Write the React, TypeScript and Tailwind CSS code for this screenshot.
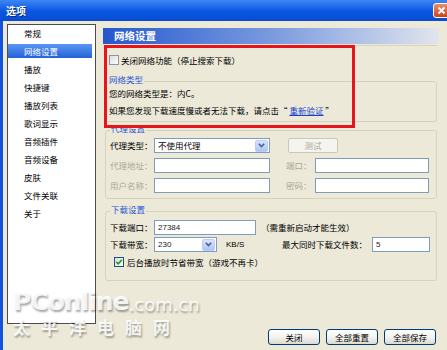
import React from 'react';

const navItems = ['常规', '网络设置', '播放', '快捷键', '播放列表', '歌词显示', '音频插件', '音频设备', '皮肤', '文件关联', '关于'];

const Check = ({ checked }: { checked?: boolean }) => (
    <span
        className={`flex h-[10px] w-[10px] shrink-0 items-center justify-center border bg-linear-to-br from-[#dcdcd7] to-white ${
            checked ? 'border-[#1c5180]' : 'border-[#8a96a8]'
        }`}
    >
        {checked && (
            <svg width="8" height="8" viewBox="0 0 8 8">
                <path d="M1.2 3.8 L3.2 5.8 L6.9 1.8" stroke="#21a121" strokeWidth="1.7" fill="none" />
            </svg>
        )}
    </span>
);

const Field = ({ className, value }: { className: string; value?: string }) => (
    <div className={`flex h-[15px] items-center border border-[#7f9db9] bg-white pl-[3px] ${className}`}>
        {value && <span className="font-['Liberation_Sans',sans-serif] text-[8px] leading-none text-[#222]">{value}</span>}
    </div>
);

const Select = ({ className, value, mono }: { className: string; value: string; mono?: boolean }) => (
    <div className={`flex h-[15px] items-center justify-between border border-[#7f9db9] bg-white pl-[3px] pr-px ${className}`}>
        <span className={mono ? "font-['Liberation_Sans',sans-serif] text-[8px] leading-none text-[#222]" : 'leading-none'}>{value}</span>
        <span className="flex h-[12px] w-[13px] items-center justify-center rounded-[2px] border border-[#b9cdf5] bg-linear-to-b from-[#d8e4fd] to-[#adc5f5]">
            <svg width="7" height="5" viewBox="0 0 7 5">
                <path d="M0.8 0.8 L3.5 3.6 L6.2 0.8" stroke="#4d6185" strokeWidth="1.6" fill="none" />
            </svg>
        </span>
    </div>
);

const Button = ({ label }: { label: string }) => (
    <div className="flex h-[16px] w-[52px] items-center justify-center rounded-[3px] border border-[#003c74] bg-linear-to-b from-white via-[#f3f3ef] to-[#dcdad0] leading-none">
        {label}
    </div>
);

const App: React.FC = () => {
    return (
        <div className="relative flex h-[350px] w-[447px] flex-col overflow-hidden bg-[#ece9d8] font-['Noto_Sans_CJK_SC',sans-serif] text-[8.5px] text-black">
            {/* title bar */}
            <div className="flex h-[21px] shrink-0 items-center justify-between bg-linear-to-b from-[#3d86f4] via-[#0b58e2] to-[#0a4bd3] pl-[6px]">
                <span className="text-[10px] font-bold leading-none text-white [text-shadow:1px_1px_0_#0a2a80]">选项</span>
                <div className="-mr-[3px] flex h-[15px] w-[17px] items-center justify-center rounded-[3px] border border-white bg-linear-to-b from-[#eb8c68] to-[#c9431c]">
                    <svg width="9" height="9" viewBox="0 0 9 9">
                        <path d="M1.5 1.5 L7.5 7.5 M7.5 1.5 L1.5 7.5" stroke="white" strokeWidth="1.8" />
                    </svg>
                </div>
            </div>

            <div className="flex flex-1 border-l-[3px] border-[#1252dc]">
                {/* nav list */}
                <div className="ml-[4px] mt-[3px] h-[300px] w-[89px] border border-[#4b4b4b] bg-white">
                    <div className="-mt-px flex flex-col">
                        {navItems.map(item =>
                            item === '网络设置' ? (
                                <div key={item} className="flex h-[18px] items-center py-[2px] pr-[3px]">
                                    <div className="flex h-full w-full items-center bg-linear-to-b from-[#5a96f2] to-[#2461d8] pl-[16px] leading-none text-white">
                                        {item}
                                    </div>
                                </div>
                            ) : (
                                <div key={item} className="flex h-[18px] items-center pl-[16px] leading-none">
                                    {item}
                                </div>
                            )
                        )}
                    </div>
                </div>

                {/* settings panel */}
                <div className="ml-[7px] flex w-[336px] flex-col pt-[7px]">
                    <div className="flex h-[16px] items-center bg-linear-to-r from-[#2457cc] via-[#7a9ade] to-[#e2e5ec] pl-[11px] text-[10.5px] font-bold leading-none text-white">
                        网络设置
                    </div>
                    <div className="mt-px h-px w-[334px] bg-[#d6d3c2]" />

                    <div className="mt-[8px] flex h-[12px] items-center gap-[2px] pl-[6px] leading-none">
                        <Check />
                        <span>关闭网络功能（停止搜索下载）</span>
                    </div>

                    {/* network type */}
                    <fieldset className="ml-[2px] mt-[7px] w-[332px] rounded-[3px] border border-[#d5d2c0]">
                        <legend className="ml-[2px] px-px pb-[4px] leading-[12px] text-[#2b55d4]">网络类型</legend>
                        <div className="-mt-[2px] flex flex-col gap-[5px] pb-[5px] pl-[3px] leading-[12px]">
                            <span>您的网络类型是：内C。</span>
                            <span>
                                如果您发现下载速度慢或者无法下载，请点击“ <span className="text-[#1a3fd0] underline">重新验证</span> ”
                            </span>
                        </div>
                    </fieldset>

                    {/* proxy */}
                    <fieldset className="ml-[2px] w-[332px] rounded-[3px] border border-[#d5d2c0]">
                        <legend className="ml-[4px] px-px pb-[4px] leading-[12px] text-[#2b55d4]">代理设置</legend>
                        <div className="flex flex-col gap-[5px] pb-[5px] pl-[4px] leading-none">
                            <div className="flex h-[15px] items-center">
                                <span className="w-[44px]">代理类型：</span>
                                <Select className="w-[116px]" value="不使用代理" />
                                <div className="ml-[18px] flex h-[15px] w-[50px] items-center justify-center rounded-[2px] border border-[#cac8bb] bg-[#f5f4ef] text-[#aca899]">
                                    测试
                                </div>
                            </div>
                            <div className="flex h-[15px] items-center text-[#aca899]">
                                <span className="w-[44px]">代理地址：</span>
                                <Field className="w-[116px]" />
                                <span className="ml-[16px] w-[29px]">端口：</span>
                                <Field className="w-[114px]" />
                            </div>
                            <div className="flex h-[15px] items-center text-[#aca899]">
                                <span className="w-[44px]">用户名称：</span>
                                <Field className="w-[116px]" />
                                <span className="ml-[16px] w-[29px]">密码：</span>
                                <Field className="w-[114px]" />
                            </div>
                        </div>
                    </fieldset>

                    {/* download */}
                    <fieldset className="ml-[2px] mt-[4px] w-[332px] rounded-[3px] border border-[#d5d2c0]">
                        <legend className="ml-[4px] px-px pb-[4px] leading-[12px] text-[#2b55d4]">下载设置</legend>
                        <div className="mt-px flex flex-col pb-[12px] pl-[4px] pr-[6px] leading-none">
                            <div className="flex h-[15px] items-center">
                                <span className="w-[44px]">下载端口：</span>
                                <Field className="w-[102px]" value="27384" />
                                <span className="ml-[5px]">（需重新启动才能生效）</span>
                            </div>
                            <div className="mt-[2px] flex h-[15px] items-center">
                                <span className="w-[44px]">下载带宽：</span>
                                <Select className="w-[63px]" value="230" mono />
                                <span className="ml-[9px] font-['Liberation_Sans',sans-serif] text-[8px]">KB/S</span>
                                <span className="ml-auto">最大同时下载文件数：</span>
                                <Field className="ml-[5px] w-[58px]" value="5" />
                            </div>
                            <div className="mt-[4px] flex h-[12px] items-center gap-[3px] pl-[4px]">
                                <Check checked />
                                <span>后台播放时节省带宽（游戏不再卡）</span>
                            </div>
                        </div>
                    </fieldset>

                    <div className="mt-[48px] flex justify-end gap-[6px] pr-[3px]">
                        <Button label="关闭" />
                        <Button label="全部重置" />
                        <Button label="全部保存" />
                    </div>
                </div>
            </div>

            {/* red highlight frame */}
            <div className="absolute left-[104px] top-[45px] h-[83px] w-[251px] border-[3px] border-[#e8141b]" />

            {/* watermark */}
            <div className="pointer-events-none absolute left-[13px] top-[289px] flex flex-col text-white/85 [text-shadow:1px_2px_2px_rgba(0,0,0,0.35)]">
                <div className="flex h-[25px] items-end font-['DejaVu_Sans',sans-serif] leading-none">
                    <span className="text-[25px] font-bold tracking-[-1px]">PConline</span>
                    <span className="text-[18px]">.com.cn</span>
                </div>
                <div className="mt-[4px] flex gap-[11px] font-['Noto_Sans_CJK_SC',sans-serif] text-[17px] font-bold leading-[18px]">
                    <span>太</span>
                    <span>平</span>
                    <span>洋</span>
                    <span>电</span>
                    <span>脑</span>
                    <span>网</span>
                </div>
            </div>
        </div>
    );
};

export default App;
